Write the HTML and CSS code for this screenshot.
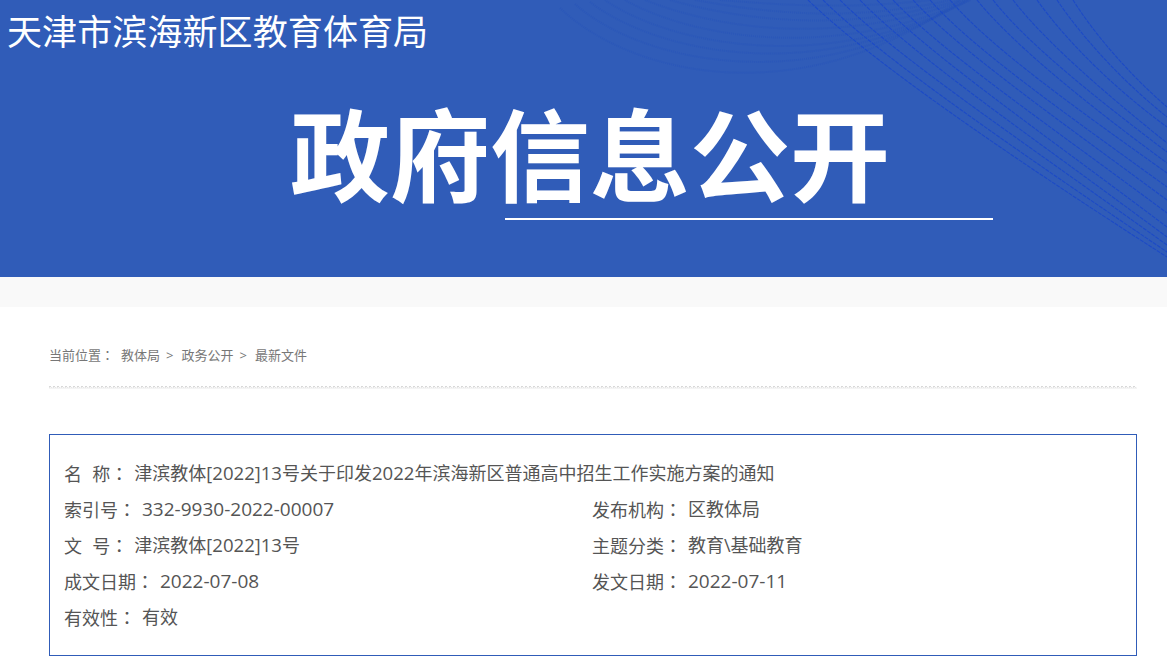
FILE: index.html
```html
<!DOCTYPE html>
<html lang="zh-CN">
<head>
<meta charset="utf-8">
<title>政府信息公开</title>
<link rel="stylesheet" href="styles.css">
</head>
<body>
<header class="banner">
  <svg class="waves" viewBox="0 0 1167 277" width="1167" height="277" aria-hidden="true">
    <g class="arcs">
      <path d="M560 8 C630 75 800 115 960 0"/>
      <path d="M575 4 C640 62 810 100 965 0"/>
      <path d="M590 2 C655 52 815 88 968 0"/>
      <path d="M605 0 C665 42 820 78 970 0"/>
      <path d="M625 0 C680 32 820 66 970 0"/>
      <path d="M645 0 C700 22 820 52 965 0"/>
      <path d="M670 0 C720 14 830 38 960 0"/>
      <path d="M695 0 C740 8 840 26 950 0"/>
      <path d="M720 0 C760 3 840 11 930 0"/>
    </g>
    <g class="rays">
      <path d="M808 0 C870 60 1000 150 1167 257"/>
      <path d="M823 0 C882 58 1009 145 1167 252"/>
      <path d="M840 0 C896 56 1019 139 1167 245"/>
      <path d="M860 0 C913 55 1028 134 1167 237"/>
      <path d="M877 0 C928 53 1037 129 1167 227"/>
      <path d="M893 0 C941 51 1046 123 1167 213"/>
      <path d="M913 0 C958 49 1056 118 1167 200"/>
      <path d="M930 0 C972 48 1065 113 1167 187"/>
      <path d="M950 0 C989 46 1074 107 1167 173"/>
      <path d="M977 0 C1013 44 1084 102 1167 163"/>
      <path d="M993 0 C1026 42 1093 96 1167 152"/>
      <path d="M1013 0 C1044 40 1102 91 1167 143"/>
      <path d="M1037 0 C1065 39 1111 86 1167 127"/>
      <path d="M1057 0 C1082 37 1121 80 1167 117"/>
      <path d="M1073 0 C1095 35 1130 75 1167 107"/>
    </g>
  </svg>
  <div class="org">天津市滨海新区教育体育局</div>
  <h1 class="hero">政府信息公开</h1>
  <div class="rule"></div>
</header>
<div class="strip"></div>
<main class="content">
  <nav class="crumbs">
    <span class="crumb-label">当前位置<span class="colon" lang="zh-TW">：</span></span>
    <span class="crumb">教体局<span class="sep">&gt;</span></span>
    <span class="crumb">政务公开<span class="sep">&gt;</span></span>
    <span>最新文件</span>
  </nav>
  <div class="dots"></div>
  <section class="meta">
    <div class="row wide"><span class="k spaced">名&nbsp;&nbsp;称<span class="colon" lang="zh-TW">：</span></span><span>津滨教体[<span class="inl">2022</span>]<span class="inl">13</span>号关于印发<span class="inl">2022</span>年滨海新区普通高中招生工作实施方案的通知</span></div>
    <div class="row"><span class="k">索引号<span class="colon" lang="zh-TW">：</span></span><span class="num">332-9930-2022-00007</span></div>
    <div class="row"><span class="k">发布机构<span class="colon" lang="zh-TW">：</span></span><span>区教体局</span></div>
    <div class="row"><span class="k spaced">文&nbsp;&nbsp;号<span class="colon" lang="zh-TW">：</span></span><span>津滨教体[<span class="inl">2022</span>]<span class="inl">13</span>号</span></div>
    <div class="row"><span class="k">主题分类<span class="colon" lang="zh-TW">：</span></span><span>教育\基础教育</span></div>
    <div class="row"><span class="k">成文日期<span class="colon" lang="zh-TW">：</span></span><span class="num">2022-07-08</span></div>
    <div class="row"><span class="k">发文日期<span class="colon" lang="zh-TW">：</span></span><span class="num">2022-07-11</span></div>
    <div class="row wide"><span class="k">有效性<span class="colon" lang="zh-TW">：</span></span><span>有效</span></div>
  </section>
</main>
</body>
</html>
```
FILE: styles.css
```css
* { box-sizing: border-box; }
html, body { margin: 0; padding: 0; background: #fff; }
body {
  font-family: "Open Sans", "Noto Sans CJK SC", sans-serif;
  color: #555;
  overflow: hidden;
}
.banner {
  position: relative;
  height: 277px;
  background: #305cb8;
  overflow: hidden;
  color: #fff;
}
.waves { position: absolute; left: 0; top: 0; }
.waves path { fill: none; }
.arcs path { stroke: #2450bc; stroke-width: 2; stroke-dasharray: 1 1; opacity: .4; }
.rays path { stroke: #1c4ac6; stroke-width: 1.1; stroke-dasharray: 4 1; }
.org {
  position: relative;
  padding: 5px 0 0 7px;
  font-family: "Noto Sans CJK SC", sans-serif;
  font-size: 35px;
  letter-spacing: .1px;
  line-height: 50px;
}
.hero {
  position: relative;
  margin: 38px 0 0 290px;
  font-family: "Noto Sans CJK SC", sans-serif;
  font-size: 100px;
  font-weight: 700;
  line-height: 116px;
  white-space: nowrap;
}
.rule {
  position: relative;
  width: 488px;
  height: 2px;
  margin: 9px 0 0 505px;
  background: #fff;
}
.strip { height: 30px; background: #f9f9f9; }
.content { padding: 39px 30px 0 49px; }
.crumbs {
  display: flex;
  font-size: 13px;
  line-height: 18px;
  color: #777;
  font-family: "Noto Sans CJK SC", sans-serif;
}
.colon { font-family: "Noto Sans CJK TC", sans-serif; }
.crumb-label { margin-right: 7px; }
.crumb { margin-right: 8px; }
.sep { margin-left: 6px; font-family: "Open Sans", sans-serif; }
.dots {
  height: 3px;
  margin-top: 22px;
  background:
    linear-gradient(90deg, #d8d8d8 2px, transparent 2px) 0 0 / 4px 1px repeat-x,
    linear-gradient(90deg, #e6e6e6 1px, #f6f6f6 1px) 0 1px / 2px 1px repeat-x,
    linear-gradient(#f4f4f4, #f4f4f4) 0 2px / 100% 1px no-repeat;
}
.meta {
  display: grid;
  grid-template-columns: 528px 1fr;
  margin-top: 45px;
  height: 222px;
  padding: 20px 14px 0;
  border: 1px solid #305cb8;
  font-size: 18px;
  line-height: 36px;
  align-content: start;
}
.row { display: flex; white-space: nowrap; height: 36px; }
.wide { grid-column: 1 / -1; }
.k { margin-right: 6px; }
.spaced { word-spacing: .5px; }
.num { font-size: 19px; }
.inl { font-size: 18.6px; }
```
